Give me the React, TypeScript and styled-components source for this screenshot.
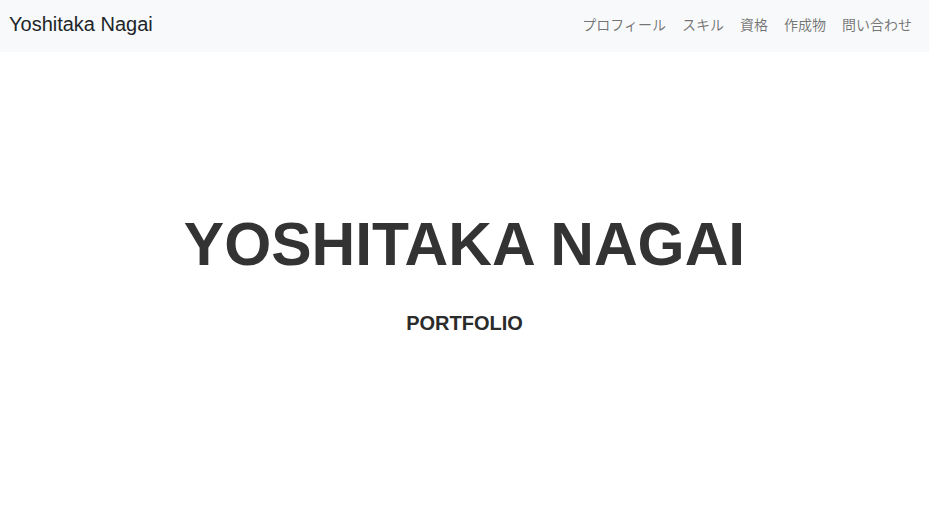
import React from "react";
import styled, { createGlobalStyle } from "styled-components";

const GlobalStyle = createGlobalStyle`
  html, body { margin: 0; padding: 0; background: #ffffff; }
  body { font-family: "Liberation Sans", Arial, "Noto Sans CJK JP", sans-serif; }
`;

const Navbar = styled.nav`
  height: 52px;
  box-sizing: border-box;
  padding: 0 9px 4px 9px;
  background: #f8f9fa;
  display: flex;
  align-items: center;
  justify-content: space-between;
`;

const Brand = styled.a`
  font-family: "Liberation Sans", Arial, sans-serif;
  font-size: 20px;
  line-height: 1.2;
  color: #212529;
  text-decoration: none;
`;

const NavList = styled.ul`
  list-style: none;
  margin: 0;
  padding: 0;
  display: flex;
  align-items: center;
`;

const NavLink = styled.a`
  display: block;
  padding: 0 8px;
  font-family: "Noto Sans CJK JP", "Liberation Sans", sans-serif;
  font-size: 14px;
  line-height: 1.5;
  color: rgba(0, 0, 0, 0.55);
  text-decoration: none;
`;

const Hero = styled.main`
  display: flex;
  flex-direction: column;
  align-items: center;
  gap: 30px;
  padding-top: 156px;
  color: #333333;
`;

const Title = styled.h1`
  margin: 0;
  font-family: "Liberation Sans", Arial, sans-serif;
  font-weight: 700;
  font-size: 60.5px;
  line-height: 1.2;
`;

const Subtitle = styled.h2`
  margin: 0;
  font-family: "Liberation Sans", Arial, sans-serif;
  font-weight: 700;
  font-size: 20px;
  line-height: 1.2;
  color: #2b2b2b;
`;

const links = ["プロフィール", "スキル", "資格", "作成物", "問い合わせ"];

export default function App() {
  return (
    <>
      <GlobalStyle />
      <Navbar>
        <Brand href="#">Yoshitaka Nagai</Brand>
        <NavList>
          {links.map((l) => (
            <li key={l}>
              <NavLink href="#">{l}</NavLink>
            </li>
          ))}
        </NavList>
      </Navbar>
      <Hero>
        <Title>YOSHITAKA NAGAI</Title>
        <Subtitle>PORTFOLIO</Subtitle>
      </Hero>
    </>
  );
}
